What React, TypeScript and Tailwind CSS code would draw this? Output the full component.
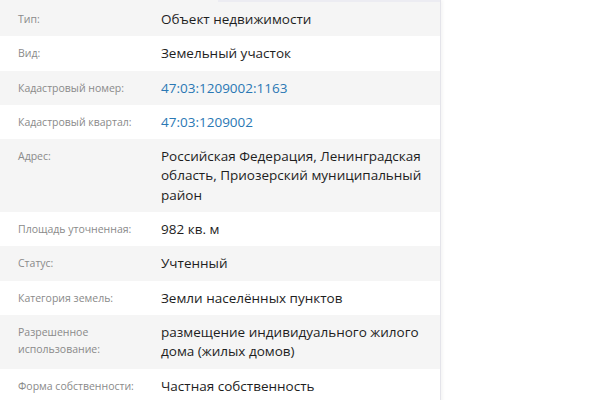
import React from 'react';

interface Row {
  label: string;
  value: string;
  link?: boolean;
}

const rows: Row[] = [
  { label: 'Тип:', value: 'Объект недвижимости' },
  { label: 'Вид:', value: 'Земельный участок' },
  { label: 'Кадастровый номер:', value: '47:03:1209002:1163', link: true },
  { label: 'Кадастровый квартал:', value: '47:03:1209002', link: true },
  { label: 'Адрес:', value: 'Российская Федерация, Ленинградская область, Приозерский муниципальный район' },
  { label: 'Площадь уточненная:', value: '982 кв. м' },
  { label: 'Статус:', value: 'Учтенный' },
  { label: 'Категория земель:', value: 'Земли населённых пунктов' },
  { label: 'Разрешенное использование:', value: 'размещение индивидуального жилого дома (жилых домов)' },
  { label: 'Форма собственности:', value: 'Частная собственность' },
];

const App: React.FC = () => {
  return (
    <div className="w-[600px] h-[400px] overflow-hidden bg-white font-['Open_Sans','Noto_Sans',sans-serif]">
      <div className="relative w-[441px] border-r border-[#e4e4ea] shadow-[2px_0_3px_rgba(0,0,0,0.04)]">
        {/* top tab strip */}
        <div className="absolute top-0 left-[218px] right-0 h-[2px] bg-[#ececf2]"></div>
        {rows.map((row, i) => (
          <div
            key={row.label}
            className={`flex ${i % 2 === 0 ? 'bg-[#f5f5f5]' : 'bg-white'} ${i === 0 ? 'pt-[10px] pb-[7px]' : 'pt-[8px] pb-[7px]'}`}
          >
            <div className="w-[161px] shrink-0 pl-[18px] pr-3 pt-[1px] text-[10.5px] leading-[17px] text-[#8a8a8a]">
              {row.label}
            </div>
            <div
              className={`flex-1 pr-2 text-[13.5px] leading-[19.3px] ${row.link ? 'text-[#2a78b4]' : 'text-[#1e1e1e]'}`}
            >
              {row.value}
            </div>
          </div>
        ))}
      </div>
    </div>
  );
};

export default App;
